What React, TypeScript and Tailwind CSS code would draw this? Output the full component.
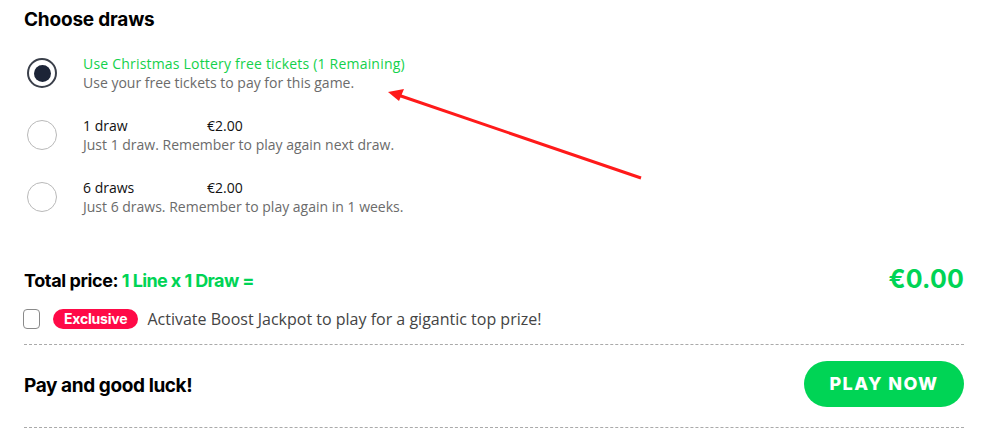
import { FC } from "react";

const options = [
  {
    title: "Use Christmas Lottery free tickets (1 Remaining)",
    desc: "Use your free tickets to pay for this game.",
    price: "",
    selected: true,
  },
  {
    title: "1 draw",
    desc: "Just 1 draw. Remember to play again next draw.",
    price: "€2.00",
    selected: false,
  },
  {
    title: "6 draws",
    desc: "Just 6 draws. Remember to play again in 1 weeks.",
    price: "€2.00",
    selected: false,
  },
];

const Radio: FC<{ selected: boolean }> = ({ selected }) => (
  <div
    className={
      selected
        ? "flex items-center justify-center size-[30px] rounded-full border-2 border-[#3a3f4a] shrink-0"
        : "size-[30px] rounded-full border border-[#b9b9b9] shrink-0"
    }
  >
    {selected ? <div className="size-[17px] rounded-full bg-[#1c2437]" /> : null}
  </div>
);

const App = () => {
  return (
    <div className="relative w-[981px] h-[436px] bg-white font-['Open_Sans',sans-serif] text-black">
      <div className="pl-6 pr-[17px] pt-[9px]">
        {/* heading */}
        <h2 className="text-[19px] font-bold leading-[22px] font-['Inter',sans-serif] tracking-[-0.2px]">
          Choose draws
        </h2>

        {/* draw options */}
        <div className="mt-[26px] flex flex-col gap-[30px]">
          {options.map((item) => (
            <div key={item.title} className="flex items-center h-[32px]">
              <div className="w-[59px] pl-[3px]">
                <Radio selected={item.selected} />
              </div>
              <div className="flex flex-col text-[14px] leading-[19px]">
                {item.price ? (
                  <div className="flex text-[#111] font-medium">
                    <span className="w-[124px]">{item.title}</span>
                    <span>{item.price}</span>
                  </div>
                ) : (
                  <span className="text-[#13d14b] tracking-[0.2px]">{item.title}</span>
                )}
                <span className="text-[#6b6b6b]">{item.desc}</span>
              </div>
            </div>
          ))}
        </div>

        {/* total */}
        <div className="mt-[55px] flex items-center justify-between h-[24px]">
          <p className="text-[18px] font-bold font-['Inter',sans-serif] tracking-[-0.4px]">
            Total price:
            <span className="text-[#00d455] tracking-[-0.6px]"> 1 Line x 1 Draw =</span>
          </p>
          <span className="text-[25px] font-bold text-[#00d455] font-['Inter',sans-serif] tracking-[0.2px]">
            €0.00
          </span>
        </div>

        {/* boost jackpot */}
        <div className="mt-[16px] flex items-center h-[21px]">
          <div className="-ml-[1px] w-[17px] h-[20px] rounded-[4px] border border-[#8a8a8a]" />
          <span className="ml-[13px] px-[11px] h-[20px] flex items-center rounded-full bg-[#ff0a47] text-white text-[14px] font-bold font-['Inter',sans-serif] tracking-[-0.2px]">
            Exclusive
          </span>
          <span className="ml-[9px] text-[16px] text-[#444]">
            Activate Boost Jackpot to play for a gigantic top prize!
          </span>
        </div>

        <div className="mt-[15px] border-t border-dashed border-[#aaa]" />

        {/* pay */}
        <div className="flex items-center justify-between h-[82px]">
          <p className="text-[19px] font-bold font-['Inter',sans-serif] tracking-[-0.4px]">
            Pay and good luck!
          </p>
          <div className="pb-[5px]">
            <button className="w-[160px] h-[46px] rounded-full bg-[#00d455] text-white text-[18px] font-extrabold tracking-[1.4px] font-['Inter',sans-serif]">
              PLAY NOW
            </button>
          </div>
        </div>

        <div className="border-t border-dashed border-[#aaa]" />
      </div>

      {/* annotation arrow */}
      <svg className="absolute left-0 top-0 pointer-events-none" width="981" height="436">
        <line x1="641" y1="178" x2="398" y2="95" stroke="#ff1a1a" strokeWidth="3" />
        <polygon points="388,92 404,89 399,101" fill="#ff1a1a" />
      </svg>
    </div>
  );
};

export default App;
